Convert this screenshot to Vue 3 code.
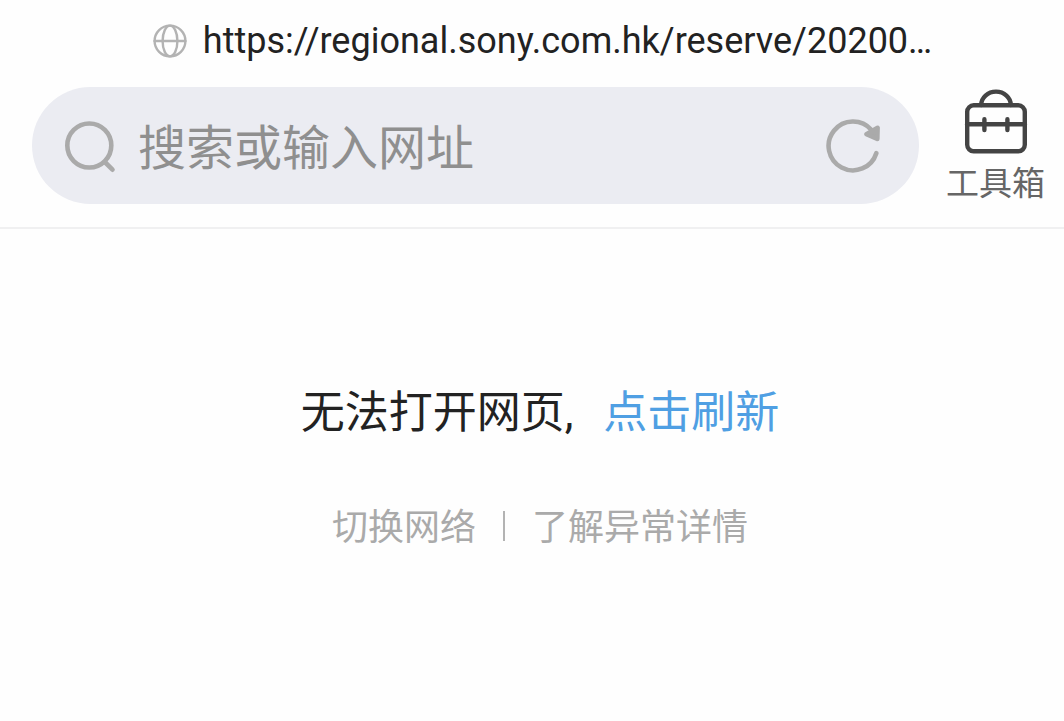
<script setup>
import { ref } from 'vue'

const query = ref('')
const url = 'https://regional.sony.com.hk/reserve/20200…'
</script>

<template>
  <div class="browser">
    <header class="header">
      <div class="address">
        <svg class="globe" viewBox="0 0 34 34" aria-hidden="true">
          <circle cx="17" cy="17" r="15.4" />
          <ellipse cx="17" cy="17" rx="7.4" ry="15.4" />
          <path d="M1.6 17H32.4" />
        </svg>
        <span class="url">{{ url }}</span>
      </div>
      <div class="bar">
        <form class="search" role="search" @submit.prevent>
          <svg class="lens" viewBox="0 0 52 54" aria-hidden="true">
            <circle cx="25.3" cy="26.5" r="22" />
            <path d="M40.8 43L48.5 50.7" />
          </svg>
          <input v-model="query" class="field" type="text" aria-label="搜索或输入网址" placeholder="搜索或输入网址" />
          <button class="reload" type="button" aria-label="刷新">
            <svg class="reload-icon" viewBox="0 0 56 56" aria-hidden="true">
              <path class="arc" d="M51.3 35.2A24.4 24.4 0 1 1 46.5 12" />
              <path class="head" d="M52.6 9.8L52.3 20.9L41.4 16.2Z" />
            </svg>
          </button>
        </form>
        <button class="toolbox" type="button">
          <svg class="case" viewBox="0 0 64 66" aria-hidden="true">
            <rect x="3.2" y="16.3" width="57.6" height="46" rx="6.5" />
            <path d="M17.2 16A14.8 13.4 0 0 1 46.8 16M3 35.2H61" />
            <path class="clasp" d="M20.4 30.2V41M43.4 30.2V41" />
          </svg>
          <span>工具箱</span>
        </button>
      </div>
    </header>
    <main class="message">
      <p class="title"><span>无法打开网页<span class="comma">,</span></span><a class="refresh" href="#">点击刷新</a></p>
      <nav class="links">
        <a href="#">切换网络</a>
        <span class="divider"></span>
        <a href="#">了解异常详情</a>
      </nav>
    </main>
  </div>
</template>

<style>
body {
  margin: 0;
  background: #fefefe;
}
</style>

<style scoped>
.browser {
  font-family: Roboto, "Noto Sans CJK SC", sans-serif;
  color: #222;
}
svg {
  display: block;
  flex: none;
  fill: none;
  stroke-linecap: round;
  stroke-linejoin: round;
}
button {
  padding: 0;
  border: 0;
  background: none;
  font: inherit;
}
a {
  color: inherit;
  text-decoration: none;
}
.header {
  padding: 20px 19px 22px 32px;
  border-bottom: 2px solid #f0f0f1;
}
.address {
  display: flex;
  align-items: center;
  justify-content: center;
  gap: 16px;
  height: 42px;
  margin-bottom: 25px;
  padding-left: 8px;
}
.globe {
  width: 34px;
  height: 34px;
  stroke: #b3b3b3;
  stroke-width: 2.4;
}
.url {
  font-size: 36px;
  line-height: 42px;
  white-space: nowrap;
}
.bar {
  display: flex;
  align-items: flex-start;
  gap: 27px;
}
.search {
  display: flex;
  flex: 1;
  align-items: center;
  min-width: 0;
  height: 117px;
  box-sizing: border-box;
  padding: 0 38px 0 32px;
  border-radius: 59px;
  background: #ebecf2;
}
.lens {
  width: 52px;
  height: 54px;
  stroke: #aaa;
  stroke-width: 4.6;
}
.field {
  flex: 1;
  min-width: 0;
  margin-left: 22px;
  padding: 0 0 4px;
  border: 0;
  outline: 0;
  background: none;
  color: #222;
  font: 48px/72px "Noto Sans CJK SC", sans-serif;
}
.field::placeholder {
  color: #8f8f8f;
  opacity: 1;
}
.reload-icon {
  width: 56px;
  height: 56px;
  stroke: #aaa;
  stroke-width: 4.6;
}
.head {
  fill: #aaa;
}
.toolbox {
  display: flex;
  flex-direction: column;
  align-items: center;
  flex: none;
  padding-top: 2px;
  color: #666;
  font: 33px/48px "Noto Sans CJK SC", sans-serif;
}
.case {
  width: 64px;
  height: 66px;
  margin-bottom: 2px;
  stroke: #444;
  stroke-width: 4.4;
}
.message {
  display: flex;
  flex-direction: column;
  align-items: center;
  padding: 148px 0 32px 16px;
  font-family: "Noto Sans CJK SC", sans-serif;
}
.title {
  display: flex;
  gap: 30px;
  margin: 0;
  font-size: 44px;
  line-height: 64px;
}
.comma {
  font-family: Roboto, sans-serif;
}
.refresh {
  color: #4f9fe3;
}
.links {
  display: flex;
  align-items: center;
  gap: 27px;
  margin-top: 53px;
  color: #aaa;
  font-size: 36px;
  line-height: 52px;
}
.divider {
  width: 2px;
  height: 30px;
  margin-top: 4px;
  background: #b3b3b3;
}
</style>
